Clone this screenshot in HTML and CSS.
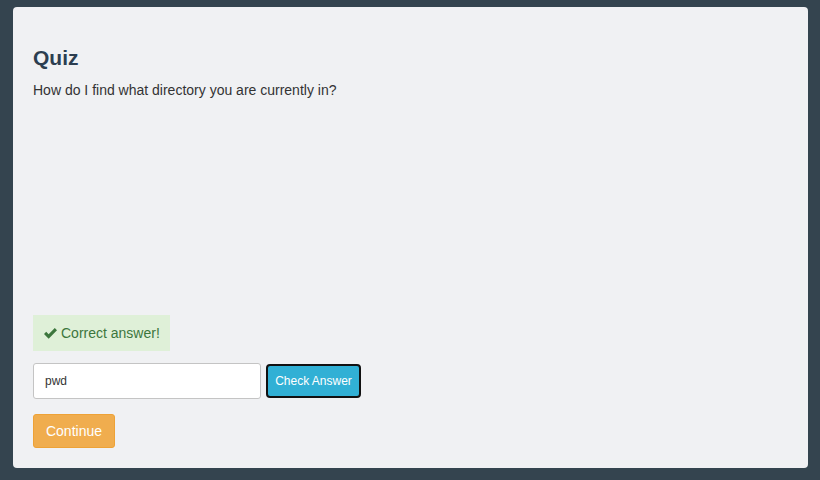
FILE: index.html
```html
<!DOCTYPE html>
<html>
<head>
<meta charset="utf-8">
<link rel="stylesheet" href="styles.css">
</head>
<body>
<div class="card">
  <h2 class="title">Quiz</h2>
  <p class="question">How do I find what directory you are currently in?</p>
  <div class="spacer"></div>
  <div class="alert">
    <svg class="check" viewBox="0 0 16 14" width="15" height="13"><path d="M1 7.5 L3.4 5.2 L6 7.8 L12.6 1 L15 3.4 L6 12.6 Z" fill="#3c763d"/></svg>
    <span>Correct answer!</span>
  </div>
  <div class="answer-row">
    <input class="answer" type="text" value="pwd">
    <button class="btn-check">Check Answer</button>
  </div>
  <div class="continue-row">
    <button class="btn-continue">Continue</button>
  </div>
</div>
</body>
</html>
```
FILE: styles.css
```css
html, body {
  margin: 0;
  height: 100%;
}
body {
  background: #34444f;
  padding: 7px 12px 12px 13px;
  box-sizing: border-box;
  font-family: "Liberation Sans", Arial, sans-serif;
}
.card {
  background: #f0f1f3;
  border-radius: 4px;
  height: 461px;
  box-sizing: border-box;
  padding: 20px;
  display: flex;
  flex-direction: column;
  align-items: flex-start;
}
.title {
  margin: 19px 0 0;
  font-size: 21px;
  line-height: 24px;
  font-weight: bold;
  color: #2c3e50;
}
.question {
  margin: 11px 0 0;
  font-size: 14px;
  line-height: 18px;
  color: #333;
}
.spacer {
  flex: 1;
}
.alert {
  background: #dff0d8;
  color: #3c763d;
  height: 36px;
  width: 137px;
  box-sizing: border-box;
  padding: 0 10px;
  display: flex;
  align-items: center;
  gap: 3px;
  font-size: 14px;
}
.check {
  flex: none;
}
.answer-row {
  margin-top: 12px;
  display: flex;
  align-items: center;
  gap: 5px;
}
.answer {
  width: 228px;
  height: 36px;
  box-sizing: border-box;
  border: 1px solid #c4c4c4;
  border-radius: 3px;
  background: #fff;
  padding: 0 11px;
  font-family: "Liberation Sans", Arial, sans-serif;
  font-size: 12px;
  color: #333;
  margin: 0;
}
.btn-check {
  width: 95px;
  height: 34px;
  box-sizing: border-box;
  border: 2px solid #111;
  border-radius: 4px;
  background: #31b0d5;
  color: #fff;
  font-family: "Liberation Sans", Arial, sans-serif;
  font-size: 12px;
  padding: 0;
  margin: 0;
}
.continue-row {
  margin-top: 15px;
}
.btn-continue {
  width: 82px;
  height: 34px;
  box-sizing: border-box;
  border: 1px solid #eea236;
  border-radius: 3px;
  background: #f0ad4e;
  color: #fff;
  font-family: "Liberation Sans", Arial, sans-serif;
  font-size: 14px;
  padding: 0;
  margin: 0;
}
```
